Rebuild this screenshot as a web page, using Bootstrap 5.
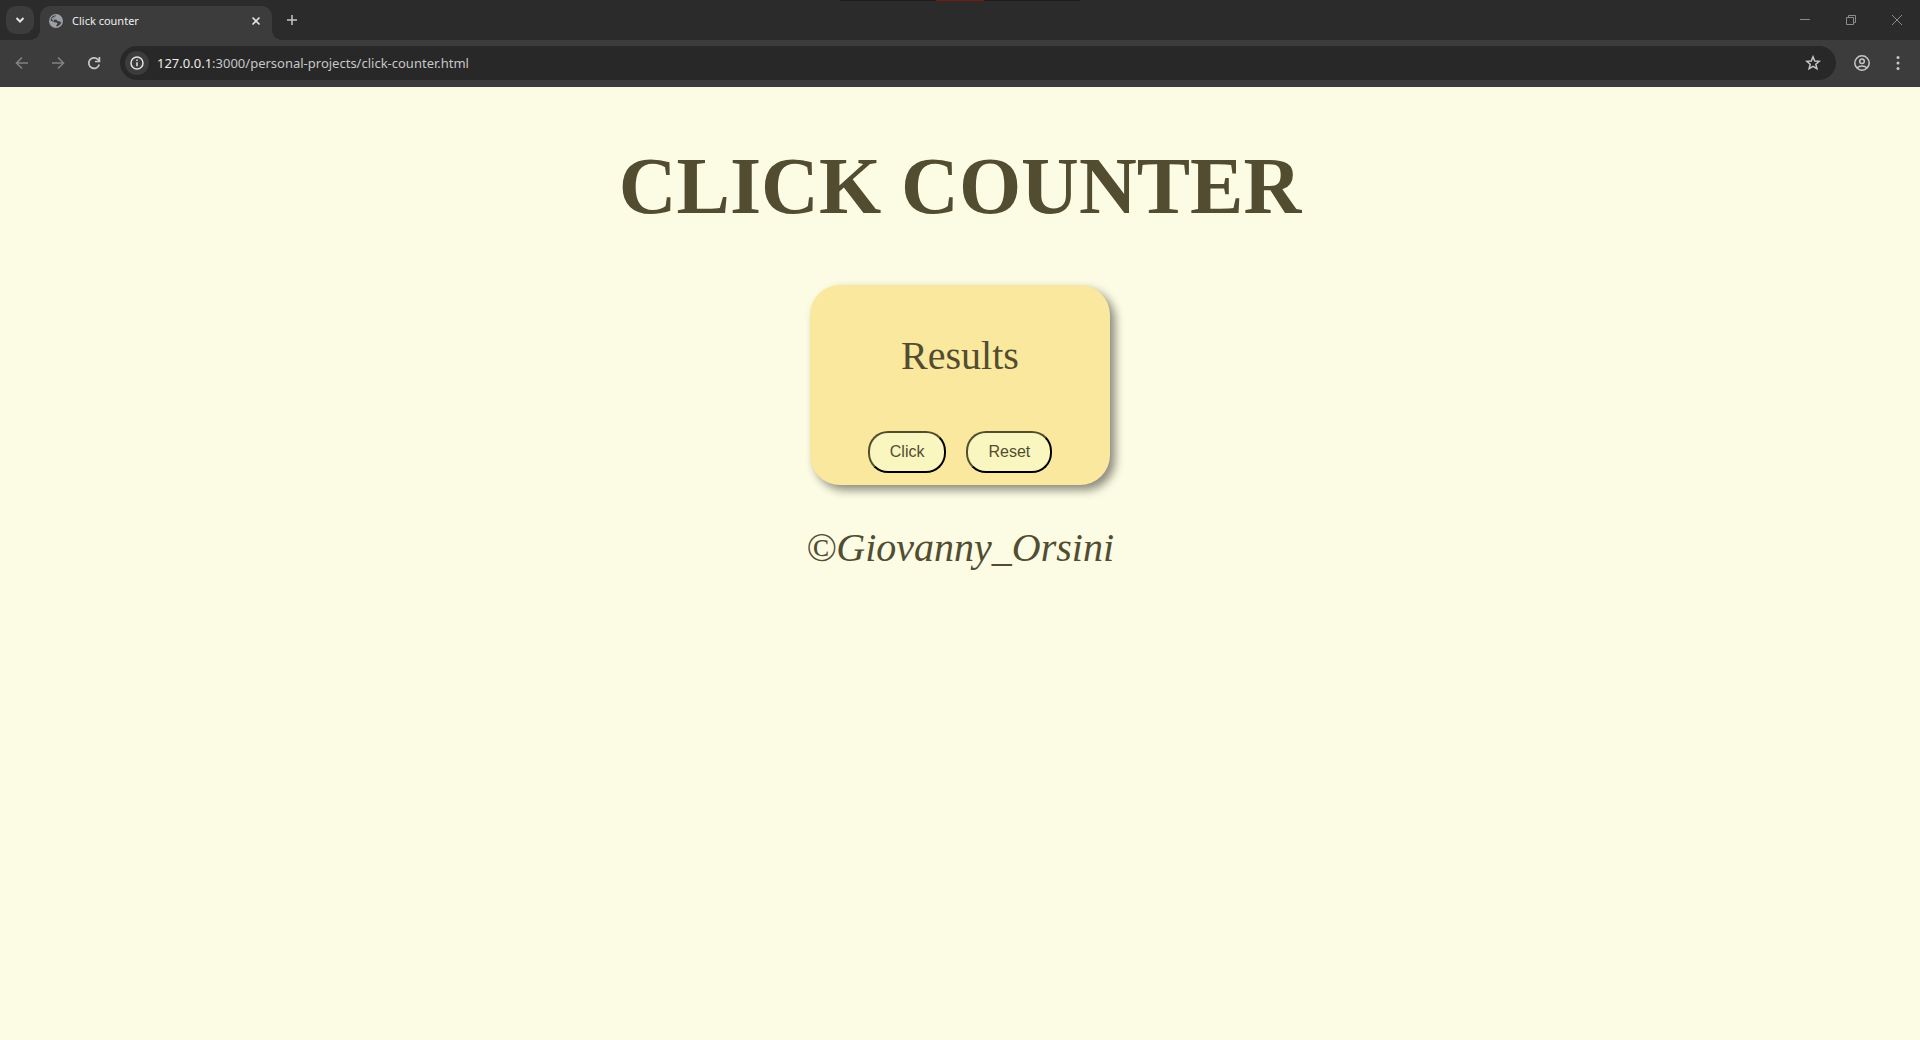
<!DOCTYPE html>
<html lang="en">
<head>
<meta charset="utf-8">
<meta name="viewport" content="width=device-width, initial-scale=1">
<title>Click counter</title>
<link href="https://cdn.jsdelivr.net/npm/bootstrap@5.3.0/dist/css/bootstrap.min.css" rel="stylesheet">
<style>
  body { background: #fcfbe3; color: #524d31; font-family: "Liberation Serif", "Times New Roman", serif; }
  .browser { background: #3c3c3c; color: #e3e3e3; font-family: "Noto Sans", "Open Sans", sans-serif; }
  .browser svg { display: block; fill: none; stroke: currentColor; }
  .browser button { border: 0; padding: 0; background: none; color: inherit; }
  .strip { background: #2b2b2b; height: 40px; }
  .rec-strip { top: 0; left: 50%; width: 240px; height: 1px; background: #1d1d1d; transform: translateX(-50%); }
  .rec-mark { width: 48px; height: 1px; background: #7a1a17; }
  .browser .tab-search { width: 28px; height: 28px; border-radius: 10px; background: #3c3c3c; margin: 6px 6px 0 6px; }
  .site-tab { width: 232px; height: 34px; margin-top: 6px; padding: 0 10px 4px 9px; background: #3c3c3c; border-radius: 10px 10px 0 0; position: relative; }
  .site-tab::before, .site-tab::after { content: ""; position: absolute; bottom: 0; width: 10px; height: 10px; }
  .site-tab::before { right: 100%; background: radial-gradient(circle at 0 0, #2b2b2b 10px, #3c3c3c 10px); }
  .site-tab::after { left: 100%; background: radial-gradient(circle at 100% 0, #2b2b2b 10px, #3c3c3c 10px); }
  .tab-title { font-size: 11px; line-height: 16px; margin-left: 9px; color: #eee; }
  .browser .new-tab { width: 28px; height: 40px; margin-left: 6px; color: #c7c7c7; }
  .win-keys { color: #8b8b8b; }
  .browser .win-keys button { width: 46px; height: 40px; }
  .tool-row { height: 47px; padding: 0 4px 2px 4px; background: #3c3c3c; color: #c7c7c7; }
  .browser .nav-key { width: 36px; height: 34px; }
  .dim { opacity: .5; }
  .address { height: 34px; margin-left: 8px; padding: 0 15px 0 5px; border-radius: 17px; background: #282828; }
  .browser .site-info { width: 24px; height: 24px; border-radius: 12px; background: #3c3c3c; color: #e3e3e3; }
  .url-box { margin-left: 8px; }
  .url-text { font-size: 13px; line-height: 20px; color: #c7c7c7; }
  .url-host { color: #ececec; }
  .page-title { font-size: 80px; line-height: 92px; font-weight: 700; margin: 53px 0; color: inherit; }
  .counter-box { width: 300px; height: 200px; border-radius: 30px; background: #fae89e; box-shadow: 5px 5px 10px rgba(0, 0, 0, .45); padding: 48px 0 12px; }
  .big-line { font-size: 40px; line-height: 46px; }
  .credit { margin-top: 40px; }
  .pill { font-family: "Liberation Sans", Arial, sans-serif; font-size: 16px; line-height: 18px; padding: 10px 20px; color: #524d31; background: #faf6bf; border: 2px solid; border-color: #524d2b #000 #000 #524d2b; border-radius: 20px; }
</style>
</head>
<body>
<header class="browser">
  <div class="strip d-flex position-relative">
    <div class="rec-strip position-absolute d-flex justify-content-center"><span class="rec-mark"></span></div>
    <button class="tab-search d-flex align-items-center justify-content-center" type="button" aria-label="Search tabs">
      <svg width="10" height="8" viewBox="0 0 10 8" stroke-width="2"><path d="M1.500 2 5 5.500 8.500 2"/></svg>
    </button>
    <div class="site-tab d-flex align-items-center">
      <svg width="14" height="14" viewBox="0 0 14 14"><circle cx="7" cy="7" r="7" fill="#9aa0a6" stroke="none"/><path d="M8.800 1.500C6.800 1.300 6.200 2 6.400 3.200L4.800 4v1.600l2.700.2c.6 0 .7.600.7 1.200l2 .2c.5.500.8.900 2.200.6C12 10.500 9.800 12.400 7.200 12.400l.2-1.500 1.200-1.100C8.500 8.900 7.800 8.600 7 8.500L4.600 8 1.600 6.500C1.400 4.200 3.200 2 5.500 1.600z" fill="#3c3c3c" stroke="none"/><path d="M2.500 4.500 6.500 1.800 6.400 3.200 4.800 4v1.600l-.2 2.400z" fill="#9aa0a6" stroke="none"/></svg>
      <span class="tab-title">Click counter</span>
      <button class="ms-auto" type="button" aria-label="Close tab"><svg width="12" height="12" viewBox="0 0 12 12" stroke-width="1.600"><path d="m2.500 2.500 7 7m0-7-7 7"/></svg></button>
    </div>
    <button class="new-tab d-flex align-items-center justify-content-center" type="button" aria-label="New tab"><svg width="12" height="12" viewBox="0 0 12 12" stroke-width="1.500"><path d="M6 1v10M1 6h10"/></svg></button>
    <div class="win-keys d-flex ms-auto">
      <button class="d-flex align-items-center justify-content-center" type="button" aria-label="Minimize"><svg width="10" height="10" viewBox="0 0 10 10"><path d="M0 4.500h10"/></svg></button>
      <button class="d-flex align-items-center justify-content-center" type="button" aria-label="Restore"><svg width="10" height="10" viewBox="0 0 10 10"><path d="M.5 2.500h7v7h-7zM2.500 2.500v-2h7v7h-2"/></svg></button>
      <button class="d-flex align-items-center justify-content-center" type="button" aria-label="Close"><svg width="10" height="10" viewBox="0 0 10 10"><path d="m0 0 10 10M10 0 0 10"/></svg></button>
    </div>
  </div>
  <div class="tool-row d-flex align-items-center">
    <button class="nav-key dim d-flex align-items-center justify-content-center" type="button" aria-label="Back"><svg width="14" height="14" viewBox="0 0 14 14" stroke-width="1.600"><path d="M13 7H2M7 1.500 1.500 7 7 12.500"/></svg></button>
    <button class="nav-key dim d-flex align-items-center justify-content-center" type="button" aria-label="Forward"><svg width="14" height="14" viewBox="0 0 14 14" stroke-width="1.600"><path d="M1 7h11M7 1.500 12.500 7 7 12.500"/></svg></button>
    <button class="nav-key d-flex align-items-center justify-content-center" type="button" aria-label="Reload"><svg width="14" height="14" viewBox="0 0 14 14" stroke-width="1.700"><path d="M12.200 8.500A5.300 5.300 0 1 1 10.800 3.300L12.300 5M12.400 1v4.500H8"/></svg></button>
    <div class="address d-flex align-items-center flex-grow-1">
      <button class="site-info d-flex align-items-center justify-content-center" type="button" aria-label="Site information"><svg width="14" height="14" viewBox="0 0 14 14" stroke-width="1.500"><circle cx="7" cy="7" r="6"/><path d="M7 6.200v4M7 3.600v1.500"/></svg></button>
      <div class="url-box url-text flex-grow-1"><span class="url-host">127.0.0.1</span>:3000/personal-projects/click-counter.html</div>
      <button type="button" aria-label="Bookmark"><svg width="16" height="16" viewBox="0 0 16 16" stroke-width="1.500"><path d="m8 1.800 1.700 4.200 4.600.3-3.500 2.900 1.100 4.500L8 11.300l-3.900 2.400 1.100-4.500L1.700 6.300l4.600-.3z"/></svg></button>
    </div>
    <button class="nav-key d-flex align-items-center justify-content-center ms-2" type="button" aria-label="Profile"><svg width="16" height="16" viewBox="0 0 16 16" stroke-width="1.500"><circle cx="8" cy="8" r="7.200"/><circle cx="8" cy="6.200" r="2.300"/><path d="M3 12.800c2.800-2.500 7.200-2.500 10 0"/></svg></button>
    <button class="nav-key d-flex align-items-center justify-content-center" type="button" aria-label="Menu"><svg width="4" height="14" viewBox="0 0 4 14"><g fill="currentColor" stroke="none"><circle cx="2" cy="1.600" r="1.500"/><circle cx="2" cy="7" r="1.500"/><circle cx="2" cy="12.400" r="1.500"/></g></svg></button>
  </div>
</header>
<main class="d-flex flex-column align-items-center text-center">
  <h1 class="page-title">CLICK COUNTER</h1>
  <section class="counter-box d-flex flex-column align-items-center justify-content-between">
    <div class="big-line">Results</div>
    <div class="d-flex">
      <button class="pill me-1" type="button">Click</button>
      <button class="pill ms-3" type="button">Reset</button>
    </div>
  </section>
  <footer class="big-line credit fst-italic">©Giovanny_Orsini</footer>
</main>
<script src="https://cdn.jsdelivr.net/npm/bootstrap@5.3.0/dist/js/bootstrap.bundle.min.js"></script>
</body>
</html>
